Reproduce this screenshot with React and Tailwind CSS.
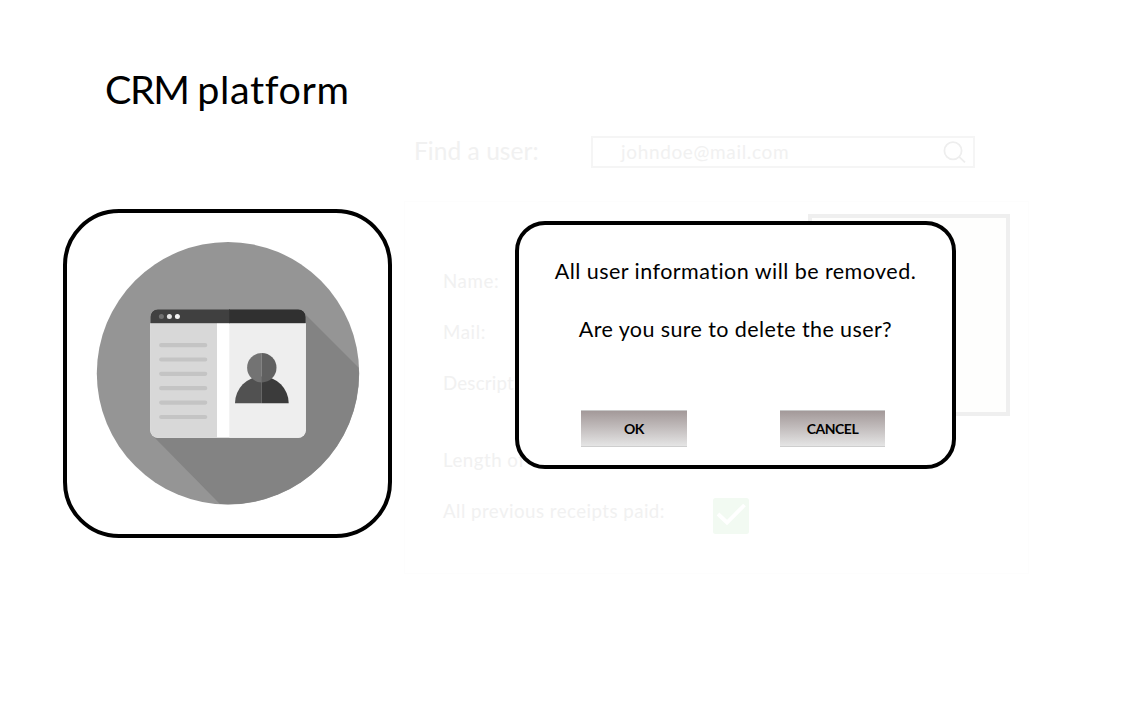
const PAGE_FONT = "font-[Lato,Carlito,sans-serif] [font-variant-ligatures:none]";

function CrmIcon() {
  return (
    <svg className="mb-[2px] block size-[264px]" viewBox="96 241 264 264" aria-hidden="true">
      <defs>
        <clipPath id="disc">
          <circle cx="228" cy="373.3" r="131" />
        </clipPath>
        <clipPath id="window">
          <rect x="150.3" y="309.2" width="155.5" height="128.5" rx="7.5" />
        </clipPath>
      </defs>
      <circle cx="228" cy="373.3" r="131.2" fill="#959595" />
      <path d="M303 312 L440 449 V560 H275 L153 436 Z" fill="#838383" clipPath="url(#disc)" />
      <g clipPath="url(#window)">
        <rect x="150" y="309" width="157" height="130" fill="#ffffff" />
        <rect x="150" y="323" width="67" height="115" fill="#d8d8d8" />
        <rect x="229.3" y="323" width="77" height="115" fill="#eeeeee" />
        <rect x="150" y="309" width="80" height="14.2" fill="#404040" />
        <rect x="229.3" y="309" width="77" height="14.2" fill="#303030" />
      </g>
      <circle cx="161.4" cy="316.5" r="2.5" fill="#707070" />
      <circle cx="169.4" cy="316.5" r="2.5" fill="#e6e6e6" />
      <circle cx="177.4" cy="316.5" r="2.5" fill="#f4f4f4" />
      <path
        d="M161.2 345.2H205.2M161.2 359.5H205.2M161.2 373.8H205.2M161.2 388.2H205.2M161.2 402.6H205.2M161.2 417H205.2"
        stroke="#c4c4c4"
        strokeWidth="4.2"
        strokeLinecap="round"
      />
      <path d="M235 403.2 A26.8 26.8 0 0 1 261.8 376.4 V403.2Z" fill="#515151" />
      <path d="M288.7 403.2 A26.8 26.8 0 0 0 261.8 376.4 V403.2Z" fill="#3b3b3b" />
      <path d="M261.8 353 A14.7 14.7 0 0 0 261.8 382.4Z" fill="#737373" />
      <path d="M261.8 353 A14.7 14.7 0 0 1 261.8 382.4Z" fill="#606060" />
    </svg>
  );
}

function SearchIcon() {
  return (
    <svg className="mb-px size-6" viewBox="0 0 24 24" fill="none" stroke="#eeeeee" strokeWidth="1.8" aria-hidden="true">
      <circle cx="11" cy="10.7" r="8.6" />
      <path d="M17.2 16.8L23 22.4" />
    </svg>
  );
}

function CheckBox() {
  return (
    <svg className="size-9" viewBox="0 0 36 36" aria-hidden="true">
      <rect width="36" height="36" rx="2.5" fill="#f2faf2" />
      <path d="M5 16L14 24.5L31.5 7" fill="none" stroke="#ffffff" strokeWidth="3.8" />
    </svg>
  );
}

function SearchRow() {
  return (
    <div className="flex h-[32px] items-center pl-[10px]">
      <label className="mb-[3px] w-[177px] text-[24.5px] leading-[28px] tracking-[0.05px] text-[#f1f1f1]">Find a user:</label>
      <div className="flex h-[32px] w-[384px] items-center justify-between border-2 border-[#f5f5f5] pr-[7px] pl-7">
        <span className="text-[19px] tracking-[0.65px] text-[#f1f1f1]">johndoe@mail.com</span>
        <SearchIcon />
      </div>
    </div>
  );
}

function UserPanel() {
  return (
    <section className="mt-[33px] flex h-[373px] w-[625px] justify-between border border-[#fdfdfd] pr-[18px] pl-[38px] text-[18.7px] leading-[51px] text-[#f1f1f1]">
      <div className="w-[330px] pt-[54px]">
        <p className="tracking-[0.6px]">Name:</p>
        <p className="tracking-[0.6px]">Mail:</p>
        <p className="tracking-[0.2px]">Description:</p>
        <p className="mt-[26px] tracking-[0.5px]">Length of</p>
        <div className="flex items-center">
          <p className="w-[270px] tracking-[0.46px]">All previous receipts paid:</p>
          <div className="mt-[9px]"><CheckBox /></div>
        </div>
      </div>
      <div className="mt-3 h-[202px] w-[202px] border-4 border-[#efefef] bg-[#fefefd]" />
    </section>
  );
}

function DialogButton({ children }) {
  return (
    <button className="h-[37px] w-[106px] border-y border-t-[#c8c8c8] border-b-[#cecece] bg-linear-to-b from-[#a39999] to-[#e5e5e5] text-[14px] font-bold tracking-[-0.5px] text-black last:w-[105px]">
      {children}
    </button>
  );
}

function ConfirmDialog() {
  return (
    <div
      role="dialog"
      className="absolute top-[221px] left-[515px] flex h-[248px] w-[441px] flex-col items-center rounded-[30px] border-4 border-black bg-white pt-8 text-center text-[21.5px] leading-[29px] text-black"
    >
      <p className="tracking-[0.46px]">All user information will be removed.</p>
      <p className="mt-[29px] tracking-[0.4px]">Are you sure to delete the user?</p>
      <div className="mt-[66px] flex gap-[93px] pr-[5px]">
        <DialogButton>OK</DialogButton>
        <DialogButton>CANCEL</DialogButton>
      </div>
    </div>
  );
}

export default function App() {
  return (
    <main className={`relative h-[707px] w-[1130px] overflow-hidden bg-white ${PAGE_FONT}`}>
      <header className="h-[136px] pt-[64px] pl-[105px]">
        <h1 className="text-[39.5px] leading-[50px] tracking-[0.6px] text-black">
          <span className="tracking-[-1.4px]">CRM </span>platform
        </h1>
      </header>
      <div className="flex gap-3 pl-[63px]">
        <div className="mt-[73px] flex size-[329px] items-center justify-center rounded-[56px] border-4 border-black">
          <CrmIcon />
        </div>
        <div>
          <SearchRow />
          <UserPanel />
        </div>
      </div>
      <ConfirmDialog />
    </main>
  );
}
